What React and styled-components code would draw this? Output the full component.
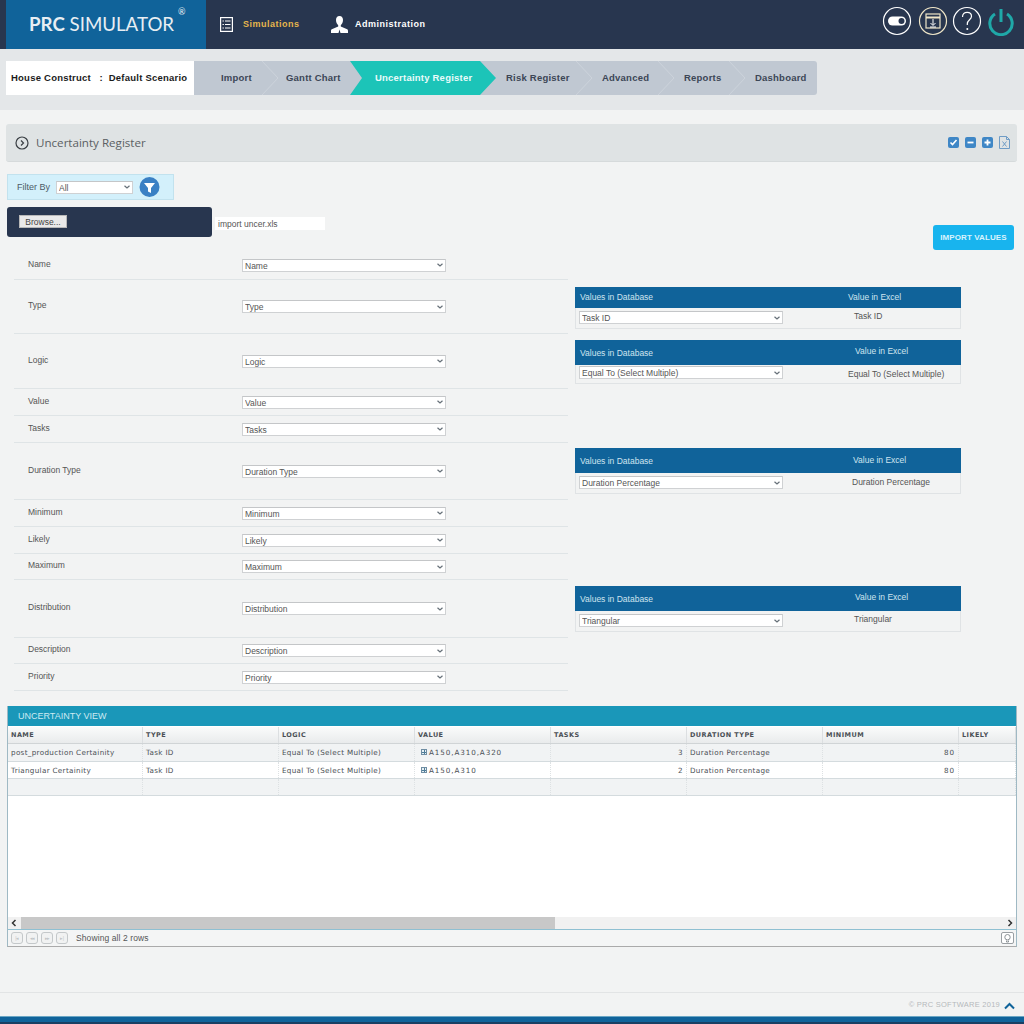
import React from "react";
import styled, { createGlobalStyle } from "styled-components";

const GlobalStyle = createGlobalStyle`
  html, body { margin: 0; padding: 0; height: 1024px; overflow: hidden; background: #f2f3f3; }
  * { box-sizing: border-box; }
  body { font-family: "Liberation Sans", Arial, sans-serif; color: #444; }
`;

const Page = styled.div`
  position: relative;
  width: 1024px;
  height: 1024px;
`;

const Header = styled.header`
  height: 49px;
  background: #28364f;
  display: flex;
  align-items: center;
  position: relative;
`;

const Logo = styled.div`
  margin-left: 6px;
  width: 200px;
  height: 49px;
  background: #10639a;
  color: #e8eef3;
  font-family: Lato, sans-serif;
  font-size: 18.7px;
  line-height: 48px;
  padding-left: 23px;
  position: relative;
  white-space: nowrap;
  b { font-weight: 700; }
  sup {
    position: absolute;
    left: 172px;
    top: -12px;
    font-size: 9px;
  }
`;

const NavItem = styled.div`
  position: absolute;
  left: ${(p) => p.$left}px;
  top: 0;
  height: 49px;
  display: flex;
  align-items: center;
  gap: ${(p) => p.$gap}px;
  color: ${(p) => (p.$active ? "#e6b64c" : "#fff")};
  font-size: 9px;
  font-weight: 700;
  letter-spacing: 0.5px;
  padding-bottom: 1px;
  svg { display: block; }
`;

const RoundIcon = styled.svg`
  position: absolute;
  left: ${(p) => p.$left}px;
  top: 6px;
  width: 30px;
  height: 30px;
`;

const SubBar = styled.div`
  height: 61px;
  background: #e4e7e9;
  padding: 12px 0 0 6px;
  display: flex;
`;

const Scenario = styled.div`
  width: 188px;
  height: 34px;
  background: #fff;
  color: #1b1b1b;
  font-size: 9.5px;
  font-weight: 700;
  letter-spacing: 0.23px;
  line-height: 33px;
  padding-left: 5px;
  white-space: pre;
`;

const Steps = styled.div`
  position: relative;
  width: 623px;
  height: 34px;
  background: #c0c8d2;
  border-radius: 0 3px 3px 0;
`;

const Step = styled.div`
  position: absolute;
  left: ${(p) => p.$left}px;
  top: 0;
  line-height: 33px;
  color: #3c4656;
  font-size: 9.5px;
  font-weight: 700;
  letter-spacing: 0.22px;
  white-space: nowrap;
`;

const ActiveStep = styled.div`
  position: absolute;
  left: 156px;
  top: 0;
  width: 146px;
  height: 34px;
  background: #1cc4b8;
  clip-path: polygon(0 0, 130px 0, 146px 17px, 130px 34px, 0 34px, 12px 17px);
  color: #e9fbfa;
  font-size: 9.5px;
  font-weight: 700;
  letter-spacing: 0.22px;
  line-height: 33px;
  padding-left: 25px;
  white-space: nowrap;
`;

const StepDivider = styled.svg`
  position: absolute;
  left: ${(p) => p.$left}px;
  top: 0;
  width: 17px;
  height: 34px;
`;

const Panel = styled.div`
  position: absolute;
  left: 6px;
  top: 124px;
  width: 1011px;
  height: 38px;
  background: #dfe3e4;
  border-radius: 3px;
  border-bottom: 1px solid #d6dadb;
  display: flex;
  align-items: center;
  padding-left: 9px;
  color: #5b5f63;
  font-family: "Open Sans", sans-serif;
  font-size: 11.6px;
  gap: 7px;
`;

const PanelTools = styled.div`
  position: absolute;
  right: 7px;
  top: 12px;
  display: flex;
  gap: 6px;
  align-items: center;
  svg { display: block; }
`;

const FilterBar = styled.div`
  position: absolute;
  left: 7px;
  top: 174px;
  width: 167px;
  height: 26px;
  background: #d3f0fb;
  border: 1px solid #c2e2ee;
  display: flex;
  align-items: center;
  padding-left: 9px;
  font-size: 9px;
  color: #4d5b66;
`;

const NativeSelect = styled.select`
  appearance: none;
  height: 13px;
  width: ${(p) => p.$width}px;
  padding: 1px 12px 0 2px;
  border: 1px solid #cfd1d3;
  border-top-color: #c4c6c8;
  border-radius: 0;
  background: #fff url("data:image/svg+xml,%3Csvg xmlns='http://www.w3.org/2000/svg' width='6' height='4'%3E%3Cpath d='M.5.7L3 3 5.5.7' fill='none' stroke='%23667078' stroke-width='1.2'/%3E%3C/svg%3E") no-repeat right 2.5px center;
  color: #555;
  font-family: "Liberation Sans", Arial, sans-serif;
  font-size: 8.5px;
  line-height: 11px;
  outline: none;
`;

const FilterSelect = styled(NativeSelect)`
  margin-left: 6px;
  margin-right: 6px;
`;

const BrowseBar = styled.div`
  position: absolute;
  left: 7px;
  top: 207px;
  width: 205px;
  height: 30px;
  background: #28364f;
  border-radius: 3px;
  padding: 8px 0 0 12px;
`;

const BrowseButton = styled.button`
  display: block;
  width: 48px;
  height: 13px;
  padding: 0;
  border: 1px solid #b8b8b8;
  background: #e9e9e9;
  color: #444;
  font-family: "Liberation Sans", Arial, sans-serif;
  font-size: 8.5px;
  line-height: 10px;
`;

const FileName = styled.div`
  position: absolute;
  left: 215px;
  top: 217px;
  width: 110px;
  height: 13px;
  background: #fff;
  padding-left: 3px;
  font-size: 8.5px;
  line-height: 14px;
  color: #555;
`;

const ImportButton = styled.button`
  position: absolute;
  left: 933px;
  top: 225px;
  width: 81px;
  height: 25px;
  border: 0;
  border-radius: 3px;
  background: #18b4ee;
  color: #d8f3fd;
  font-family: "Liberation Sans", Arial, sans-serif;
  font-size: 8px;
  font-weight: 700;
  letter-spacing: 0.1px;
  padding: 0;
`;

const FormList = styled.div`
  position: absolute;
  left: 14px;
  top: 251px;
  width: 554px;
`;

const FormRow = styled.div`
  height: ${(p) => p.$height}px;
  border-bottom: 1px solid #dfe4e6;
  display: flex;
  align-items: center;
  padding-left: 14px;
`;

const FormLabel = styled.div`
  width: 214px;
  font-size: 8.5px;
  color: #555;
  position: relative;
  top: -1.5px;
`;

const MapBlock = styled.div`
  position: absolute;
  left: 575px;
  top: ${(p) => p.$top}px;
  width: 386px;
  height: ${(p) => p.$height}px;
  border: 1px solid #e0e3e5;
  border-top: 0;
`;

const MapHead = styled.div`
  position: relative;
  height: ${(p) => p.$height}px;
  margin: 0 -1px;
  background: #10639a;
  color: #cfe3ef;
  font-size: 8.5px;
`;

const MapHeadText = styled.span`
  position: absolute;
  left: ${(p) => p.$left}px;
  top: ${(p) => p.$top}px;
  line-height: 10px;
  white-space: nowrap;
`;

const MapSelect = styled(NativeSelect)`
  position: absolute;
  left: 3px;
  bottom: 4px;
`;

const MapValue = styled.span`
  position: absolute;
  left: ${(p) => p.$left}px;
  top: ${(p) => p.$top}px;
  font-size: 8.5px;
  line-height: 10px;
  color: #555;
  white-space: nowrap;
`;

const Grid = styled.section`
  position: absolute;
  left: 7px;
  top: 706px;
  width: 1010px;
  height: 241px;
  background: #fff;
  border: 1px solid #9fb9c4;
  border-top: 0;
  border-bottom-color: #aaa;
  overflow: hidden;
`;

const GridTitle = styled.div`
  height: 20px;
  margin: 0 -1px;
  background: #1a97b9;
  color: #cdeaf2;
  font-size: 9px;
  line-height: 20px;
  padding-left: 11px;
`;

const GridRow = styled.div`
  display: grid;
  grid-template-columns: 135px repeat(6, 136px) 57px;
  height: ${(p) => p.$height}px;
  background: ${(p) => (p.$alt ? "#f1f3f4" : "#fff")};
  border-bottom: 1px solid #d4dbde;
`;

const HeadRow = styled(GridRow)`
  background: linear-gradient(#fafbfb, #e9ebec);
  border-bottom: 1px solid #d0d4d6;
  margin-top: 1px;
`;

const HeadCell = styled.div`
  font-family: "DejaVu Sans", sans-serif;
  font-size: 6.5px;
  font-weight: 700;
  letter-spacing: 0.45px;
  color: #4a4f55;
  line-height: 16px;
  padding-left: 3px;
  border-right: 1px solid #dcdfe1;
  white-space: nowrap;
  overflow: hidden;
`;

const Cell = styled.div`
  font-family: "DejaVu Sans", sans-serif;
  font-size: 7.2px;
  letter-spacing: ${(p) => (p.$spaced ? "0.9px" : "0.32px")};
  color: #4a4f55;
  line-height: 17px;
  padding: 0 3px;
  text-align: ${(p) => (p.$right ? "right" : "left")};
  border-right: 1px dotted #dde1e3;
  white-space: nowrap;
  overflow: hidden;
`;

const PlusBox = styled.i`
  display: inline-block;
  width: 6px;
  height: 6px;
  margin: 0 2px 0 3px;
  border: 1px solid #6f8ea3;
  background: linear-gradient(#4f7d99, #4f7d99) center / 4px 1px no-repeat,
    linear-gradient(#4f7d99, #4f7d99) center / 1px 4px no-repeat, #e8f0f4;
`;

const ScrollBar = styled.div`
  position: absolute;
  left: 0;
  top: 211px;
  width: 100%;
  height: 13px;
  background: #f1f1f1;
  border-bottom: 1px solid #8fc0d2;
`;

const ScrollThumb = styled.div`
  position: absolute;
  left: 13px;
  top: 0;
  width: 534px;
  height: 12px;
  background: #c8c8c8;
`;

const ScrollArrow = styled.svg`
  position: absolute;
  left: ${(p) => p.$left}px;
  top: 2px;
  width: 8px;
  height: 8px;
`;

const Pager = styled.div`
  position: absolute;
  left: 0;
  top: 224px;
  width: 100%;
  height: 16px;
  background: #f4f5f5;
  display: flex;
  align-items: center;
  padding-left: 3px;
  font-size: 8.5px;
  letter-spacing: 0.1px;
  color: #555;
`;

const PagerButton = styled.div`
  width: 12px;
  height: 12px;
  margin-right: 3px;
  border: 1px solid #c4c8ca;
  border-radius: 3px;
  background: #f1f2f2;
  color: #c0c4c6;
  font-size: 5px;
  line-height: 10px;
  letter-spacing: -0.5px;
  text-align: center;
`;

const PagerText = styled.span`
  margin-left: 5px;
`;

const BulbButton = styled.div`
  position: absolute;
  right: 2px;
  top: 2px;
  width: 13px;
  height: 12px;
  border: 1px solid #9a9fa3;
  border-radius: 2px;
  background: #fff;
  display: flex;
  align-items: center;
  justify-content: center;
`;

const FooterLine = styled.div`
  position: absolute;
  left: 0;
  top: 992px;
  width: 100%;
  height: 1px;
  background: #e2e4e5;
`;

const Copyright = styled.div`
  position: absolute;
  right: 24px;
  top: 1000px;
  font-size: 7.5px;
  letter-spacing: 0.25px;
  color: #b5b9bc;
`;

const UpIcon = styled.svg`
  position: absolute;
  left: 1004px;
  top: 1002px;
  width: 11px;
  height: 8px;
`;

const BottomBar = styled.div`
  position: absolute;
  left: 0;
  top: 1016px;
  width: 100%;
  height: 8px;
  background: #10639a;
  border-top: 1px solid #6aa6c4;
  border-bottom: 2px solid #1a3f63;
`;

const fields = [
  ["Name", 29],
  ["Type", 54],
  ["Logic", 55],
  ["Value", 27],
  ["Tasks", 27],
  ["Duration Type", 57],
  ["Minimum", 27],
  ["Likely", 27],
  ["Maximum", 26],
  ["Distribution", 58],
  ["Description", 26],
  ["Priority", 27],
];

const mappings = [
  { top: 287, height: 42, head: 21, db: 6, excelLeft: 273, excelTop: 5, value: "Task ID", valueLeft: 278, valueTop: 24 },
  { top: 340, height: 44, head: 25, db: 9, excelLeft: 280, excelTop: 6, value: "Equal To (Select Multiple)", valueLeft: 272, valueTop: 29 },
  { top: 448, height: 46, head: 25, db: 9, excelLeft: 278, excelTop: 7, value: "Duration Percentage", valueLeft: 276, valueTop: 29 },
  { top: 586, height: 46, head: 25, db: 9, excelLeft: 280, excelTop: 6, value: "Triangular", valueLeft: 278, valueTop: 28 },
];

const columns = ["NAME", "TYPE", "LOGIC", "VALUE", "TASKS", "DURATION TYPE", "MINIMUM", "LIKELY"];

const rows = [
  ["post_production Certainity", "Task ID", "Equal To (Select Multiple)", "A150,A310,A320", "3", "Duration Percentage", "80"],
  ["Triangular Certainity", "Task ID", "Equal To (Select Multiple)", "A150,A310", "2", "Duration Percentage", "80"],
];

const Select = ({ label, width, as: Comp = NativeSelect }) => (
  <Comp $width={width} defaultValue={label}>
    <option>{label}</option>
  </Comp>
);

const dataRow = (row, i) => (
  <GridRow key={row[0]} $height={i === 0 ? 18 : 17} $alt={i === 0}>
    <Cell>{row[0]}</Cell>
    <Cell>{row[1]}</Cell>
    <Cell>{row[2]}</Cell>
    <Cell $spaced><PlusBox />{row[3]}</Cell>
    <Cell $right>{row[4]}</Cell>
    <Cell>{row[5]}</Cell>
    <Cell $right $spaced>{row[6]}</Cell>
    <Cell />
  </GridRow>
);

const BlueSquare = ({ children }) => (
  <svg width="11" height="11" viewBox="0 0 11 11">
    <rect width="11" height="11" rx="2" fill="#3f87c6" />
    {children}
  </svg>
);

const Divider = ({ left }) => (
  <StepDivider $left={left} viewBox="0 0 17 34" fill="none">
    <path d="M0 0l16 17L0 34" stroke="#ccd3db" />
  </StepDivider>
);

export default function App() {
  return (
    <Page>
      <GlobalStyle />
      <Header>
        <Logo><b>PRC</b> SIMULATOR<sup>®</sup></Logo>
        <NavItem $left={220} $gap={10} $active>
          <svg width="13" height="15" viewBox="0 0 13 15" fill="none">
            <rect x=".6" y=".6" width="11.8" height="13.8" stroke="#fff" strokeWidth="1.2" />
            <path d="M5 4h5.5M5 7.5h5.5M5 11h5.5" stroke="#fff" />
            <path d="M2.5 4h1.4M2.5 7.5h1.4M2.5 11h1.4" stroke="#fff" />
          </svg>
          Simulations
        </NavItem>
        <NavItem $left={331} $gap={7}>
          <svg width="17" height="17" viewBox="0 0 17 17">
            <path d="M8.5 0C6 0 5 1.8 5 4c0 2.3 1.2 4.4 2.2 5.2v1.3L.8 13.2C.2 13.5 0 14 0 15v2h7.5l1-3.5 1 3.5H17v-2c0-1-.2-1.5-.8-1.8l-6.4-2.7V9.2C10.8 8.4 12 6.3 12 4c0-2.2-1-4-3.5-4z" fill="#fff" />
          </svg>
          Administration
        </NavItem>
        <RoundIcon $left={882} viewBox="0 0 30 30" fill="none">
          <circle cx="15" cy="15" r="13.5" stroke="#fff" strokeWidth="1.2" />
          <rect x="6" y="10.5" width="18" height="9" rx="4.5" fill="#fff" />
          <circle cx="19.5" cy="15" r="3" fill="#28364f" />
        </RoundIcon>
        <RoundIcon $left={918} viewBox="0 0 30 30" fill="none">
          <circle cx="15" cy="15" r="13.5" stroke="#efe6c8" strokeWidth="1.2" />
          <rect x="8" y="8" width="14" height="14" stroke="#efe6c8" strokeWidth="1.2" />
          <path d="M8 11.5h14" stroke="#efe6c8" strokeWidth="2" />
          <path d="M15 13v6M12.5 17l2.5 2.5 2.5-2.5M12 21h6" stroke="#fff" strokeWidth="1" />
        </RoundIcon>
        <RoundIcon $left={952} viewBox="0 0 30 30" fill="none">
          <circle cx="15" cy="15" r="13.5" stroke="#fff" strokeWidth="1.2" />
          <path d="M10.5 11c0-3 2-4.7 4.6-4.7s4.4 1.7 4.4 4c0 3.4-4.2 3.6-4.2 7.6v1" stroke="#fff" strokeWidth="1.2" />
          <circle cx="15.3" cy="23" r="1" fill="#fff" />
        </RoundIcon>
        <RoundIcon $left={986} viewBox="0 0 30 30" fill="none">
          <path d="M9 8a11.2 11.2 0 1 0 12 0" stroke="#1fa8a8" strokeWidth="3" />
          <path d="M15 3v13" stroke="#1fa8a8" strokeWidth="3" />
        </RoundIcon>
      </Header>

      <SubBar>
        <Scenario>{"House Construct   :  Default Scenario"}</Scenario>
        <Steps>
          <Step $left={27}>Import</Step>
          <Divider left={68} />
          <Step $left={92}>Gantt Chart</Step>
          <ActiveStep>Uncertainty Register</ActiveStep>
          <Step $left={312}>Risk Register</Step>
          <Divider left={382} />
          <Step $left={408}>Advanced</Step>
          <Divider left={464} />
          <Step $left={490}>Reports</Step>
          <Divider left={535} />
          <Step $left={561}>Dashboard</Step>
        </Steps>
      </SubBar>

      <Panel>
        <svg width="14" height="14" viewBox="0 0 14 14" fill="none">
          <circle cx="7" cy="7" r="6" stroke="#3a3f44" strokeWidth="1.2" />
          <path d="M6 4.5L8.5 7 6 9.5" stroke="#3a3f44" strokeWidth="1.2" />
        </svg>
        Uncertainty Register
        <PanelTools>
          <BlueSquare><path d="M2.5 5.5l2 2 4-4.5" stroke="#fff" strokeWidth="1.6" fill="none" /></BlueSquare>
          <BlueSquare><path d="M2.5 5.5h6" stroke="#fff" strokeWidth="1.8" /></BlueSquare>
          <BlueSquare><path d="M2.5 5.5h6M5.5 2.5v6" stroke="#fff" strokeWidth="1.8" /></BlueSquare>
          <svg width="11" height="13" viewBox="0 0 11 13" fill="none">
            <path d="M.5.5h7l3 3v9H.5zM7.5.5v3h3" stroke="#6f9cc6" />
            <path d="M3.5 5.5l4 5M7.5 5.5l-4 5" stroke="#6f9cc6" />
          </svg>
        </PanelTools>
      </Panel>

      <FilterBar>
        Filter By
        <Select label="All" width={77} as={FilterSelect} />
        <svg width="21" height="20" viewBox="0 0 21 20">
          <circle cx="10.5" cy="10" r="10" fill="#3a80c4" />
          <path d="M5 6h11l-4 5v5l-3-1.5V11z" fill="#fff" />
        </svg>
      </FilterBar>

      <BrowseBar><BrowseButton>Browse...</BrowseButton></BrowseBar>
      <FileName>import uncer.xls</FileName>
      <ImportButton>IMPORT VALUES</ImportButton>

      <FormList>
        {fields.map(([name, height]) => (
          <FormRow key={name} $height={height}>
            <FormLabel>{name}</FormLabel>
            <Select label={name} width={204} />
          </FormRow>
        ))}
      </FormList>

      {mappings.map((m) => (
        <MapBlock key={m.top} $top={m.top} $height={m.height}>
          <MapHead $height={m.head}>
            <MapHeadText $left={5} $top={m.db - 1}>Values in Database</MapHeadText>
            <MapHeadText $left={m.excelLeft} $top={m.excelTop}>Value in Excel</MapHeadText>
          </MapHead>
          <Select label={m.value} width={204} as={MapSelect} />
          <MapValue $left={m.valueLeft} $top={m.valueTop}>{m.value}</MapValue>
        </MapBlock>
      ))}

      <Grid>
        <GridTitle>UNCERTAINTY VIEW</GridTitle>
        <HeadRow $height={17}>
          {columns.map((c) => <HeadCell key={c}>{c}</HeadCell>)}
        </HeadRow>
        {rows.map(dataRow)}
        <GridRow $height={17} $alt>
          {columns.map((c) => <Cell key={c} />)}
        </GridRow>
        <ScrollBar>
          <ScrollThumb />
          <ScrollArrow $left={2} viewBox="0 0 8 8" fill="none">
            <path d="M5.5 1L2.5 4l3 3" stroke="#333" strokeWidth="1.5" />
          </ScrollArrow>
          <ScrollArrow $left={998} viewBox="0 0 8 8" fill="none">
            <path d="M2.5 1l3 3-3 3" stroke="#333" strokeWidth="1.5" />
          </ScrollArrow>
        </ScrollBar>
        <Pager>
          <PagerButton>|◂</PagerButton>
          <PagerButton>◂◂</PagerButton>
          <PagerButton>▸▸</PagerButton>
          <PagerButton>▸|</PagerButton>
          <PagerText>Showing all 2 rows</PagerText>
          <BulbButton>
            <svg width="7" height="9" viewBox="0 0 7 9" fill="none">
              <circle cx="3.5" cy="3.2" r="2.7" stroke="#8c9296" />
              <path d="M2.5 6.5v1.5h2V6.5" stroke="#8c9296" />
            </svg>
          </BulbButton>
        </Pager>
      </Grid>

      <FooterLine />
      <Copyright>© PRC SOFTWARE 2019</Copyright>
      <UpIcon viewBox="0 0 11 8" fill="none">
        <path d="M1 6.5l4.5-4.5L10 6.5" stroke="#10639a" strokeWidth="2" />
      </UpIcon>
      <BottomBar />
    </Page>
  );
}
